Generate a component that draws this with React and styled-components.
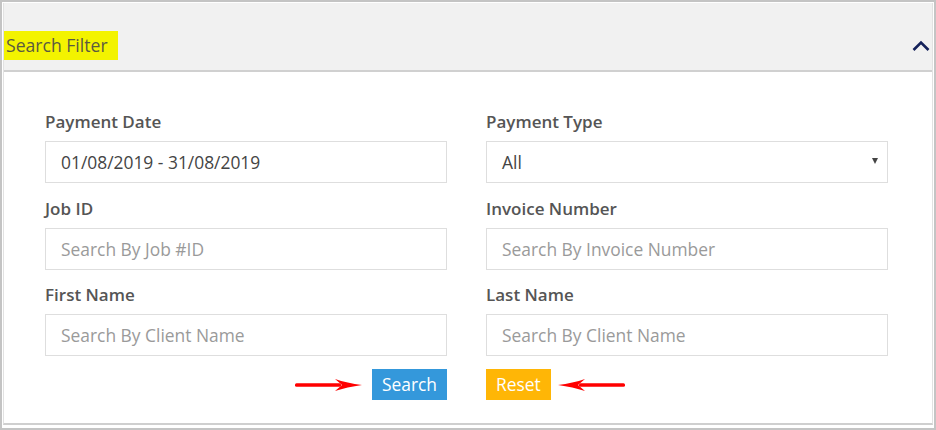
import React from "react";
import styled, { createGlobalStyle } from "styled-components";

const Global = createGlobalStyle`
  html, body { margin: 0; padding: 0; background: #fff; }
  body { font-family: "Open Sans", "Liberation Sans", sans-serif; }
  * { box-sizing: border-box; }
`;

const Frame = styled.div`
  width: 936px;
  height: 430px;
  border: 2px solid #c4c4c4;
  padding: 1px 1px 2px 1px;
  background: #fff;
`;

const Panel = styled.section`
  border-left: 1px solid #e2e2e2;
  border-right: 1px solid #e2e2e2;
  border-bottom: 2px solid #cfcfcf;
`;

const Header = styled.header`
  display: flex;
  align-items: center;
  justify-content: space-between;
  background: #f1f1f1;
  padding: 28px 2px 10px 0;
  border-bottom: 2px solid #d0d0d0;
`;

const Title = styled.h2`
  margin: 0;
  font-size: 17.6px;
  font-weight: 400;
  line-height: 29px;
  height: 29px;
  color: #5a5a40;
  background: #f3f300;
  padding: 0 10px 0 2px;
`;

const Toggle = styled.button`
  border: 0;
  background: none;
  padding: 0;
  width: 18px;
  height: 29px;
  display: flex;
  align-items: center;
  justify-content: center;
  cursor: pointer;
`;

const Body = styled.div`
  padding: 39px 43px 23px 41px;
`;

const Grid = styled.div`
  display: grid;
  grid-template-columns: 402px 402px;
  column-gap: 39px;
  row-gap: 14.5px;
`;

const Field = styled.div`
  display: flex;
  flex-direction: column;
`;

const Label = styled.label`
  font-size: 17px;
  font-weight: 600;
  line-height: 22px;
  color: #555;
  margin-bottom: 8px;
`;

const Input = styled.input`
  height: 42px;
  width: 100%;
  border: 1px solid #dedede;
  padding: 0 15px;
  font-family: "Open Sans", "Liberation Sans", sans-serif;
  font-size: 17.4px;
  color: #444;
  background: #fff;
  outline: none;
  &::placeholder { color: #9a9a9a; opacity: 1; }
`;

const SelectBox = styled.div`
  height: 42px;
  border: 1px solid #dedede;
  display: flex;
  align-items: center;
  justify-content: space-between;
  padding: 0 9px 0 15px;
  font-size: 17.4px;
  color: #444;
  background: #fff;
`;

const Caret = styled.span`
  width: 0;
  height: 0;
  border-left: 3.5px solid transparent;
  border-right: 3.5px solid transparent;
  border-top: 6px solid #444;
  margin-top: -2px;
`;

const Actions = styled.div`
  display: grid;
  grid-template-columns: 402px 402px;
  column-gap: 39px;
  margin-top: 13px;
`;

const ActionCell = styled.div`
  display: flex;
  align-items: center;
  justify-content: ${(p) => (p.$end ? "flex-end" : "flex-start")};
  gap: ${(p) => (p.$end ? "10px" : "7px")};
`;

const Button = styled.button`
  height: 31px;
  border: 0;
  padding: 0 10px;
  font-family: "Open Sans", "Liberation Sans", sans-serif;
  font-size: 17.4px;
  line-height: 31px;
  color: #fff;
  background: ${(p) => p.$bg};
  cursor: pointer;
`;

const Arrow = ({ dir }) => (
  <svg
    width="67"
    height="14"
    viewBox="0 0 67 14"
    style={dir === "left" ? { transform: "scaleX(-1)" } : undefined}
  >
    <rect x="0" y="5.3" width="46" height="3.4" rx="1.5" fill="#ff0000" />
    <path d="M40 1 Q52 5 67 7 Q52 9 40 13 L47 7 Z" fill="#ff0000" />
  </svg>
);

export default function App() {
  return (
    <>
      <Global />
      <Frame>
        <Panel>
          <Header>
            <Title>Search Filter</Title>
            <Toggle aria-label="Collapse">
              <svg width="18" height="12" viewBox="0 0 18 12">
                <polyline
                  points="1.5,10 9,2.5 16.5,10"
                  fill="none"
                  stroke="#14215a"
                  strokeWidth="2.6"
                />
              </svg>
            </Toggle>
          </Header>
          <Body>
            <Grid>
              <Field>
                <Label>Payment Date</Label>
                <Input readOnly value="01/08/2019 - 31/08/2019" />
              </Field>
              <Field>
                <Label>Payment Type</Label>
                <SelectBox>
                  <span>All</span>
                  <Caret />
                </SelectBox>
              </Field>
              <Field>
                <Label>Job ID</Label>
                <Input placeholder="Search By Job #ID" />
              </Field>
              <Field>
                <Label>Invoice Number</Label>
                <Input placeholder="Search By Invoice Number" />
              </Field>
              <Field>
                <Label>First Name</Label>
                <Input placeholder="Search By Client Name" />
              </Field>
              <Field>
                <Label>Last Name</Label>
                <Input placeholder="Search By Client Name" />
              </Field>
            </Grid>
            <Actions>
              <ActionCell $end>
                <Arrow dir="right" />
                <Button $bg="#3498db">Search</Button>
              </ActionCell>
              <ActionCell>
                <Button $bg="#ffb606">Reset</Button>
                <Arrow dir="left" />
              </ActionCell>
            </Actions>
          </Body>
        </Panel>
      </Frame>
    </>
  );
}
